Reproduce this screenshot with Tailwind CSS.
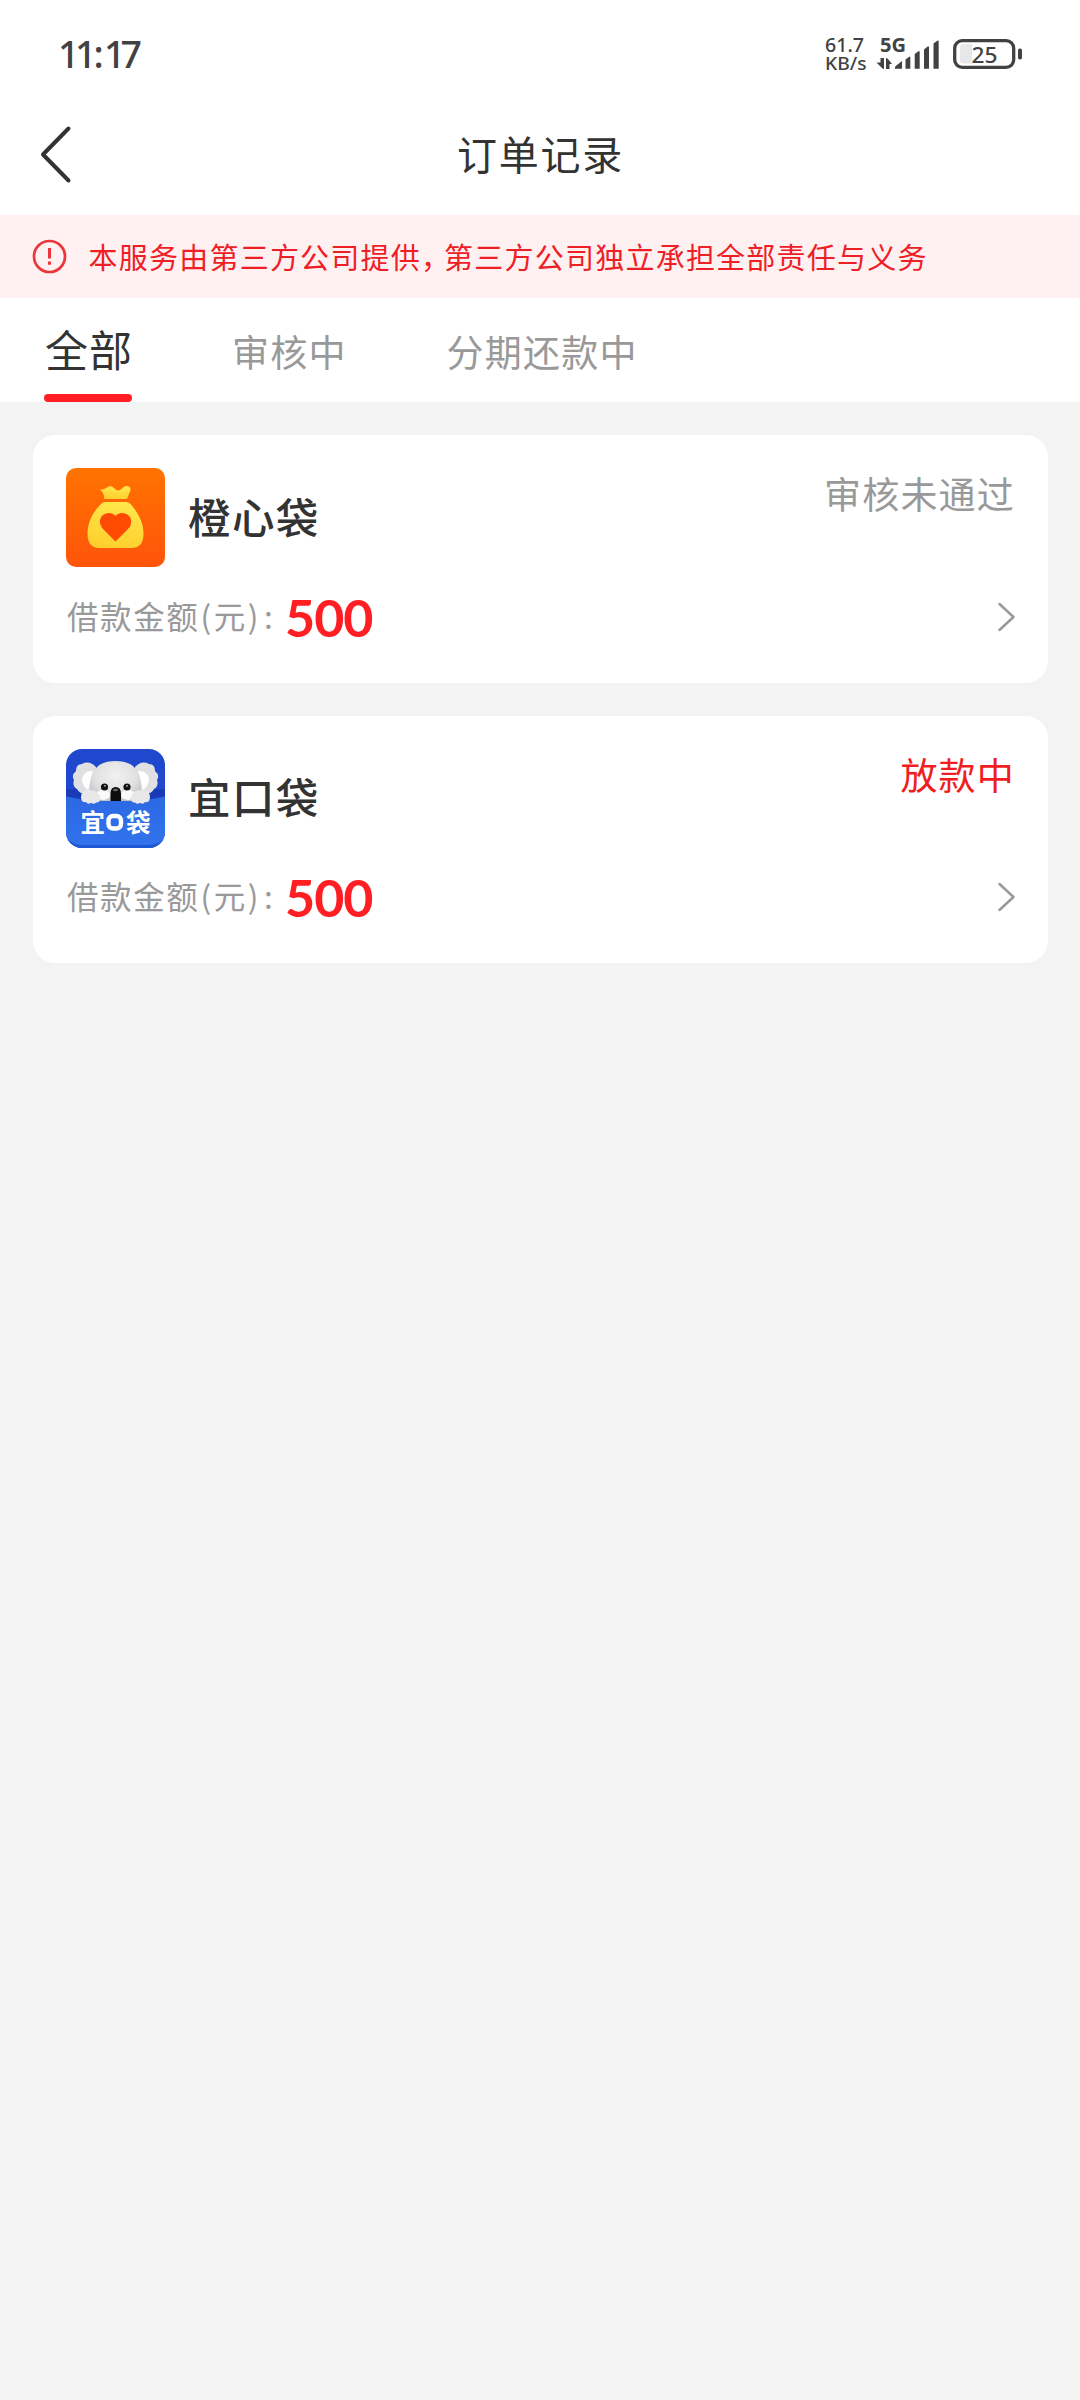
<!DOCTYPE html>
<html lang="zh-CN">
<head>
<meta charset="utf-8">
<title>订单记录</title>
<script src="https://cdn.jsdelivr.net/npm/@tailwindcss/browser@4"></script>
</head>
<body class="w-[1080px] min-h-[2400px] bg-[#f3f3f3] font-['Noto_Sans_CJK_SC',sans-serif] text-[#333] whitespace-nowrap">
  <header class="bg-white h-[215px]">
    <div class="h-[108px] flex items-center justify-between pl-[58px] pr-[57px]">
      <div class="flex font-['Noto_Sans'] font-medium text-[37.500px] leading-none text-[#424242]"><span class="tracking-[-4.5px]">11</span><span class="ml-[1.500px] tracking-[0.500px]">:</span><span class="tracking-[-5px]">17</span></div>
      <svg width="198" height="80" viewBox="825 14 198 80" fill="#424242">
        <g font-family="Noto Sans" font-size="20.5" font-weight="500">
          <text x="825" y="52" textLength="39" lengthAdjust="spacingAndGlyphs">61.7</text>
          <text x="825" y="70" font-size="18.500" textLength="41.500" lengthAdjust="spacingAndGlyphs">KB/s</text>
          <text x="880" y="51.5" font-size="19" font-weight="700" textLength="26" lengthAdjust="spacingAndGlyphs">5G</text>
          <text x="971.5" y="62.5" font-size="21.5" textLength="26" lengthAdjust="spacingAndGlyphs">25</text>
        </g>
        <path d="M880.500 58h3.500v11q-1 0-2-1l-5.500-5.500h4zM886 69V58q1 0 2 1l4 5h-2.500v5z"/>
        <path d="M895 67.500q0-1 1-1.700l6-4.800v7.700h-7zM905.500 59.500l4-3q.800 0 .800 1v11.200h-4.800zM914.700 54l4-3q1 0 1 1v16.700h-5zM924 49.500l4-3.300q1 0 1 1v21.500h-5zM933.500 43.500l4-3q1.200 0 1.200 1v27.200h-5.200z"/>
        <rect x="954.700" y="40.700" width="59" height="26.600" rx="7.500" fill="none" stroke="#424242" stroke-width="3.300"/>
        <path d="M963 44h9v19.500h-9q-3 0-3-3v-13.500q0-3 3-3z" fill="#424242" fill-opacity=".13"/>
        <rect x="1018" y="48.500" width="4" height="11" rx="1.800"/>
      </svg>
    </div>
    <div class="h-[92px] grid grid-cols-[100px_1fr_100px] items-center">
      <svg class="ml-[36px]" width="40" height="64" viewBox="36 122 40 64" fill="none" stroke="#333" stroke-width="4" stroke-linecap="round" stroke-linejoin="round"><path d="M68.500 128.500L43 154.500l25.500 26"/></svg>
      <h1 class="-mt-[2px] pl-px text-center text-[40px] leading-none tracking-[1.7px]">订单记录</h1>
    </div>
  </header>

  <div class="h-[83px] bg-[#fff1f1] flex items-center pl-[32px] text-[#ee2026]">
    <svg width="35" height="35" viewBox="0 0 35 35" fill="none" stroke="#ec343b" stroke-width="2.700"><circle cx="17.500" cy="17.500" r="15.500"/><path d="M17.500 9v10.500M17.500 22.500v3.300" stroke-width="3"/></svg>
    <p class="ml-[21.500px] text-[29px] leading-none tracking-[1.230px]">本服务由第三方公司提供<span class="tracking-[-6px]">，</span>第三方公司独立承担全部责任与义务</p>
  </div>

  <nav class="h-[104px] bg-white flex items-end pl-[44px] text-[37px] text-[#999] tracking-[1.200px] leading-none">
    <div class="w-[88px] h-full flex flex-col justify-end items-center">
      <span class="text-[43px] text-[#333] tracking-[1px] ml-[2px] mb-[24px]">全部</span>
      <i class="block w-full h-[8px] rounded-full bg-[#ff1e23]"></i>
    </div>
    <span class="ml-[100px] mb-[32px]">审核中</span>
    <span class="ml-[100px] mb-[32px]">分期还款中</span>
  </nav>

  <main class="flex flex-col gap-[33px] pl-[33px] pr-[32px] pt-[33px]">
    <section class="h-[248px] rounded-[22px] bg-white p-[33px]">
      <div class="flex">
        <svg width="99" height="99" viewBox="0 0 99 99">
          <defs>
            <linearGradient id="orange" x2="0" y2="1"><stop stop-color="#ff7300"/><stop offset="1" stop-color="#ff540b"/></linearGradient>
            <linearGradient id="gold" x1=".6" x2=".4" y2="1"><stop stop-color="#ffe84a"/><stop offset="1" stop-color="#ffce2e"/></linearGradient>
          </defs>
          <rect width="99" height="99" rx="10" fill="url(#orange)"/>
          <path d="M34 21.500Q38 22 41 19.500Q45 16.500 48.500 20.500Q52 24.500 56 20.500Q60 16.500 63.500 19Q65.500 21.500 63.500 24.500L61 31H38Q39 26 34 21.500Z" fill="url(#gold)"/>
          <path d="M39 34H60Q63 34 65.500 37C72 45 77.500 54 77.500 66Q77.500 80 65 80H34Q21.500 80 21.500 66C21.500 54 27 44 34 37Q36.500 34 39 34Z" fill="url(#gold)"/>
          <path d="M49.500 73.500L37 61Q33 56 34.200 51.500Q36 45 43 45Q47 45 49.500 48Q52 45 56 45Q63 45 65 51.500Q66 57 62 61Z" fill="#ff4a03"/>
        </svg>
        <h2 class="ml-[23px] mt-[27px] text-[42.500px] leading-none font-medium tracking-[1.4px]">橙心袋</h2>
        <span class="ml-auto mt-[7px] text-[37px] leading-none tracking-[1.2px] text-[#999]">审核未通过</span>
      </div>
      <div class="h-[100px] flex items-center text-[#999]">
        <p class="-mt-[3px] text-[31.500px] leading-none tracking-[1.600px] w-[220px] pl-px flex"><span>借款金额</span><span class="ml-[1px]">(</span><span class="ml-[1px]">元</span><span class="ml-px">)</span><span class="ml-[4px]">:</span></p>
        <strong class="-ml-px font-['Lato'] font-bold text-[52px] leading-none tracking-[-1px] text-[#ff1e23]">500</strong>
        <svg class="ml-auto" width="18" height="32" viewBox="0 0 18 32" fill="none" stroke="#999" stroke-width="2.500" stroke-linecap="round" stroke-linejoin="round"><path d="M2.500 3L16.500 16L2.500 29"/></svg>
      </div>
    </section>

    <section class="h-[247px] rounded-[22px] bg-white p-[33px]">
      <div class="flex">
        <svg width="99" height="99" viewBox="0 0 99 99">
          <defs>
            <linearGradient id="pocket" x2="0" y2="1"><stop stop-color="#2b69e3"/><stop offset="1" stop-color="#3273ed"/></linearGradient>
            <radialGradient id="fur" cx=".5" cy=".35" r=".65"><stop stop-color="#f1f1f1"/><stop offset=".65" stop-color="#e0e0e0"/><stop offset="1" stop-color="#bcbec4"/></radialGradient>
            <clipPath id="tile"><rect width="99" height="99" rx="16"/></clipPath>
          </defs>
          <g clip-path="url(#tile)">
            <path d="M0 0h99v99H0z" fill="#2048cf"/>
            <path d="M0 40h99v12H0z" fill="#193bb8"/>
            <path d="M30 18Q23 11 16 15Q10 15 10 22Q5 26 8 31Q6 37 11 40Q14 46 22 45L30 43ZM69 18Q76 11 83 15Q89 15 89 22Q94 26 91 31Q93 37 88 40Q85 46 77 45L69 43Z" fill="#e0e0e2"/>
            <path d="M27 22Q18 21 16 30Q17 38 22 41ZM72 22Q81 21 83 30Q82 38 77 41Z" fill="#fff"/>
            <path d="M49.500 12C64 12 71 18 74 29C76 37 76 48 67 54H32C23 48 23 37 25 29C28 18 35 12 49.500 12Z" fill="url(#fur)"/>
            <ellipse cx="37" cy="46" rx="7" ry="5" fill="#fafafa"/><ellipse cx="62" cy="46" rx="7" ry="5" fill="#fafafa"/>
            <circle cx="38.500" cy="38" r="3.600" fill="#111"/><circle cx="61" cy="38" r="3.600" fill="#111"/>
            <circle cx="39" cy="36.800" r=".9" fill="#bbb"/><circle cx="61" cy="36.800" r=".9" fill="#bbb"/>
            <path d="M44.500 45Q44.500 38 49.700 38Q55 38 55 45V54H44.500Z" fill="#0c0c0e"/>
            <ellipse cx="49.500" cy="41" rx="2.500" ry="1.200" fill="#666"/>
            <path d="M0 47.500Q10 49 18 51Q25 52 33 52H66Q74 52 81 51Q89 49 99 47.500V99H0Z" fill="url(#pocket)"/>
            <path d="M0 88Q5 96 18 96H81Q94 96 99 88V99H0Z" fill="#1f58d4"/>
            <path d="M15 48Q15 41 24 41Q33 41 34 49Q34 54 30 53.500Q28 56 25 53.800Q22 56 20 53Q15 54 15 48ZM84 48Q84 41 75 41Q66 41 65 49Q65 54 69 53.500Q71 56 74 53.800Q77 56 79 53Q84 54 84 48Z" fill="#e8e8ea"/>
            <text x="14.500" y="83" font-family="Noto Sans CJK SC" font-weight="700" font-size="24.500" fill="#fff">宜</text>
            <rect x="42.500" y="67" width="12.500" height="12.500" rx="4.500" fill="none" stroke="#fff" stroke-width="4.400"/>
            <text x="60" y="83" font-family="Noto Sans CJK SC" font-weight="700" font-size="24.500" fill="#fff">袋</text>
          </g>
        </svg>
        <h2 class="ml-[23px] mt-[26px] text-[42.500px] leading-none font-medium tracking-[1.4px]">宜口袋</h2>
        <span class="ml-auto mt-[7px] text-[37px] leading-none tracking-[1.2px] text-[#f01d22]">放款中</span>
      </div>
      <div class="h-[98px] flex items-center text-[#999]">
        <p class="-mt-[2px] text-[31.500px] leading-none tracking-[1.600px] w-[220px] pl-px flex"><span>借款金额</span><span class="ml-[1px]">(</span><span class="ml-[1px]">元</span><span class="ml-px">)</span><span class="ml-[4px]">:</span></p>
        <strong class="-ml-px font-['Lato'] font-bold text-[52px] leading-none tracking-[-1px] text-[#ff1e23]">500</strong>
        <svg class="ml-auto" width="18" height="32" viewBox="0 0 18 32" fill="none" stroke="#999" stroke-width="2.500" stroke-linecap="round" stroke-linejoin="round"><path d="M2.500 3L16.500 16L2.500 29"/></svg>
      </div>
    </section>
  </main>
</body>
</html>
